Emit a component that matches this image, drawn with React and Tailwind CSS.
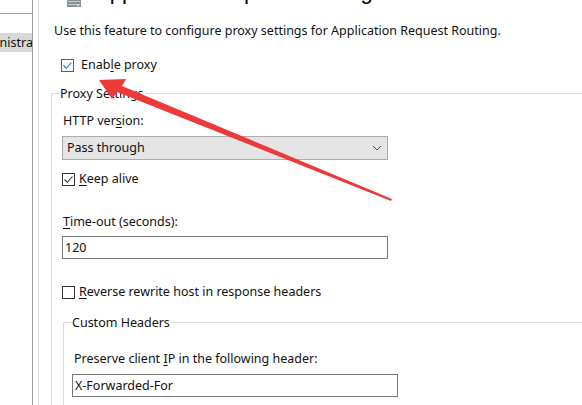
import React from 'react';

function Check({ checked, blue }) {
  return (
    <span
      className={`flex h-[13px] w-[13px] shrink-0 items-center justify-center border bg-white ${
        blue ? 'border-[#0078d7]' : 'border-[#333333]'
      }`}
    >
      {checked && (
        <svg width="11" height="11" viewBox="0 0 11 11">
          <path d="M1.5 5.5 L4.3 8.3 L9.5 2.5" fill="none" stroke={blue ? '#0078d7' : '#333333'} strokeWidth="1.1" />
        </svg>
      )}
    </span>
  );
}

function Arrow() {
  return (
    <svg className="pointer-events-none absolute left-0 top-0" width="582" height="405">
      <polygon
        points="99,80 126,79 122,86 392,199 391,201 117,92 112,99"
        fill="#ec3a3a"
      />
    </svg>
  );
}

export default function App() {
  return (
    <div
      className="relative flex h-[405px] w-[582px] overflow-hidden bg-white text-[12.5px] leading-[16px] text-[#111]"
      style={{ fontFamily: '"Noto Sans", "Liberation Sans", Arial, sans-serif' }}
    >
      {/* left tree */}
      <div className="flex w-[33px] shrink-0 flex-col border-r border-[#a0a0a0]">
        <div className="h-[14px] border-b border-[#a0a0a0]" />
        <div className="mt-[19px] h-[19px] overflow-hidden bg-[#d9d9d9]">
          <span className="-ml-[31px] block whitespace-nowrap leading-[19px]">Administrator</span>
        </div>
      </div>

      <div className="w-[6px] shrink-0 border-r border-[#dcdcdc]" />

      {/* content */}
      <div className="flex min-w-0 flex-1 flex-col">
        {/* header strip, title cut off at the top */}
        <div className="flex h-[8px] shrink-0 items-start overflow-hidden pl-[27px]">
          <svg width="16" height="8" viewBox="0 0 16 8" className="shrink-0">
            <rect x="1" y="0" width="14" height="7" fill="#8a9099" />
            <rect x="2" y="1" width="12" height="1" fill="#c9ced4" />
            <rect x="2" y="4" width="12" height="1" fill="#c9ced4" />
            <rect x="11" y="5" width="2" height="1" fill="#dfe3e6" />
          </svg>
          <div
            className="-mt-[18.6px] ml-[13px] whitespace-nowrap text-[22px] leading-[22px] text-black"
            style={{ fontFamily: '"Liberation Sans", Arial, sans-serif' }}
          >
            Application Request Routing
          </div>
        </div>

        <div className="ml-[15px] mt-[15px]">
          Use this feature to configure proxy settings for Application Request Routing.
        </div>

        <div className="ml-[22px] mt-[18px] flex h-[16px] items-center gap-[7px]">
          <Check checked blue />
          <span>
            Enab<u className="underline-offset-2">l</u>e proxy
          </span>
        </div>

        {/* Proxy Settings group */}
        <div className="ml-[12px] mt-[20px] flex flex-1 flex-col border-l border-t border-[#dcdcdc]">
          <div className="-mt-[8px] ml-[7px] w-fit bg-white px-[1px]">Proxy Settings</div>

          <div className="ml-[11px] mt-[11px]">
            HTTP ver<u className="underline-offset-2">s</u>ion:
          </div>
          <div className="ml-[10px] mt-[7px] flex h-[24px] w-[326px] items-center justify-between border border-[#adadad] bg-[#e5e5e5] pl-[4px] pr-[5px]">
            <span>Pass through</span>
            <svg width="10" height="6" viewBox="0 0 10 6">
              <path d="M1 1 L5 5 L9 1" fill="none" stroke="#555" strokeWidth="1" />
            </svg>
          </div>

          <div className="ml-[10px] mt-[11px] flex h-[16px] items-center gap-[4px]">
            <Check checked />
            <span>
              <u className="underline-offset-2">K</u>eep alive
            </span>
          </div>

          <div className="ml-[11px] mt-[27px]">
            <u className="underline-offset-2">T</u>ime-out (seconds):
          </div>
          <div className="ml-[10px] mt-[6px] flex h-[23px] w-[326px] items-center border border-[#7a7a7a] pl-[2px]">
            120
          </div>

          <div className="ml-[10px] mt-[25px] flex h-[16px] items-center gap-[4px]">
            <Check />
            <span>
              <u className="underline-offset-2">R</u>everse rewrite host in response headers
            </span>
          </div>

          {/* Custom Headers group */}
          <div className="ml-[11px] mt-[22px] flex flex-1 flex-col border-l border-t border-[#dcdcdc]">
            <div className="-mt-[8px] ml-[7px] w-fit bg-white px-[1px]">Custom Headers</div>
            <div className="ml-[10px] mt-[20px]">
              Preserve client <u className="underline-offset-2">I</u>P in the following header:
            </div>
            <div className="ml-[8px] mt-[7px] flex h-[23px] w-[326px] items-center border border-[#7a7a7a] pl-[2px]">
              X-Forwarded-For
            </div>
          </div>
        </div>
      </div>

      <Arrow />
    </div>
  );
}
